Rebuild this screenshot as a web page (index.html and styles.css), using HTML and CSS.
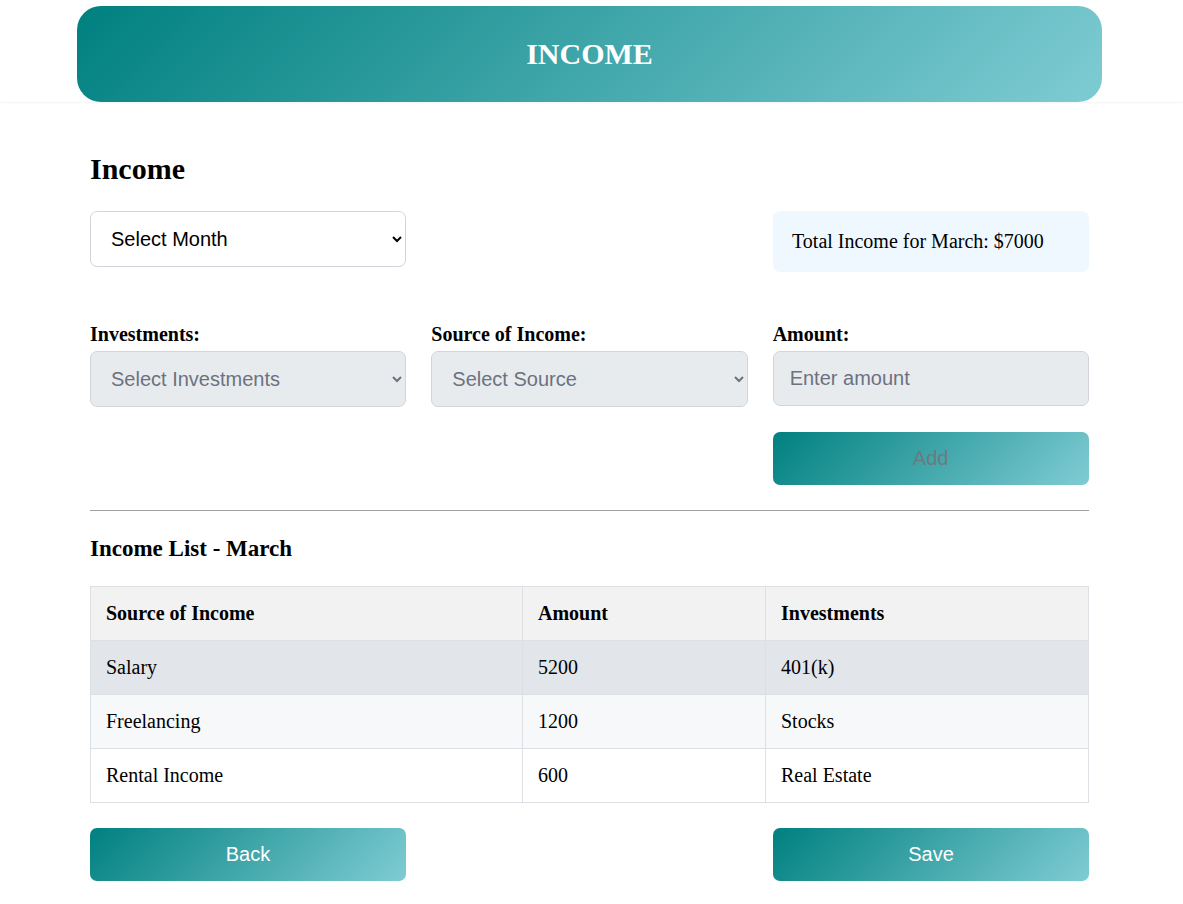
FILE: index.html
```html
<!DOCTYPE html>
<html lang="en">
<head>
<meta charset="utf-8">
<title>Income</title>
<link rel="stylesheet" href="styles.css">
</head>
<body>
<div class="topbar">
  <header class="banner"><h1>INCOME</h1></header>
</div>
<main class="page">
  <h2 class="title">Income</h2>
  <div class="row-top">
    <select class="field field-white">
      <option>Select Month</option>
    </select>
    <div class="total">Total Income for March: $7000</div>
  </div>
  <div class="form-grid">
    <div class="group">
      <label class="lbl">Investments:</label>
      <select class="field field-gray">
        <option>Select Investments</option>
      </select>
    </div>
    <div class="group">
      <label class="lbl">Source of Income:</label>
      <select class="field field-gray">
        <option>Select Source</option>
      </select>
    </div>
    <div class="group">
      <label class="lbl">Amount:</label>
      <input class="field field-gray input" type="text" placeholder="Enter amount">
    </div>
    <div class="spacer"></div>
    <div class="spacer"></div>
    <button class="btn btn-disabled">Add</button>
  </div>
  <hr class="divider">
  <h3 class="list-title">Income List - March</h3>
  <table class="tbl">
    <thead>
      <tr><th class="c1">Source of Income</th><th class="c2">Amount</th><th class="c3">Investments</th></tr>
    </thead>
    <tbody>
      <tr class="r-hover"><td>Salary</td><td>5200</td><td>401(k)</td></tr>
      <tr class="r-alt"><td>Freelancing</td><td>1200</td><td>Stocks</td></tr>
      <tr class="r-plain"><td>Rental Income</td><td>600</td><td>Real Estate</td></tr>
    </tbody>
  </table>
  <div class="actions">
    <button class="btn">Back</button>
    <button class="btn">Save</button>
  </div>
</main>
</body>
</html>
```

FILE: styles.css
```css
* { box-sizing: border-box; }
body {
  margin: 0;
  font-family: "Liberation Serif", "Times New Roman", serif;
  color: #000;
  background: #fff;
}
.topbar {
  padding-top: 6px;
  box-shadow: 0 1px 2px rgba(0, 0, 0, 0.05);
}
.banner {
  margin: 0 81px 0 77px;
  height: 96px;
  border-radius: 24px;
  background: linear-gradient(135deg, #008080 0%, #7fccd3 100%);
  display: flex;
  align-items: center;
  justify-content: center;
}
.banner h1 {
  margin: 0;
  color: #fff;
  font-size: 30px;
  font-weight: bold;
}
.page {
  width: 999px;
  margin-left: 90px;
  padding-bottom: 23px;
}
.title {
  margin: 51px 0 26px;
  font-size: 30px;
  line-height: 32px;
  font-weight: bold;
}
.row-top {
  display: flex;
  justify-content: space-between;
  align-items: flex-start;
}
.field {
  width: 316px;
  height: 56px;
  border: 1px solid #d1d5db;
  border-radius: 7px;
  padding: 0 16px;
  font-family: "Liberation Sans", Arial, sans-serif;
  font-size: 20px;
}
.field-white { background: #fff; color: #000; }
.field-gray { background: #e8ebee; color: #6b7280; width: 100%; }
.input { height: 55px; }
.input::placeholder { color: #6b7280; }
.total {
  width: 316px;
  background: #f0f8ff;
  border-radius: 7px;
  padding: 20px 19px;
  font-size: 20px;
  line-height: 21px;
}
.form-grid {
  margin-top: 52px;
  display: grid;
  grid-template-columns: repeat(3, 1fr);
  column-gap: 25px;
  row-gap: 25px;
}
.group { display: flex; flex-direction: column; }
.lbl {
  font-size: 20px;
  line-height: 21px;
  font-weight: bold;
  margin-bottom: 6px;
}
.btn {
  width: 316px;
  height: 53px;
  border: none;
  border-radius: 7px;
  background: linear-gradient(135deg, #008080 0%, #7fccd3 100%);
  color: #fff;
  font-family: "Liberation Sans", Arial, sans-serif;
  font-size: 20px;
}
.btn-disabled { color: #6b7b80; }
.divider {
  margin: 25px 0 0;
  border: none;
  border-top: 1px solid #a0a0a0;
  height: 0;
}
.list-title {
  margin: 25px 0 25px;
  font-size: 23px;
  line-height: 25px;
  font-weight: bold;
}
.tbl {
  width: 100%;
  border-collapse: collapse;
  font-size: 20px;
}
.tbl th, .tbl td {
  border: 1px solid #dcdfe3;
  height: 54px;
  padding: 0 15px;
  text-align: left;
}
.tbl th { background: #f2f2f2; font-weight: bold; }
.c1 { width: 432px; }
.c2 { width: 243px; }
.r-hover td { background: #e2e5ea; }
.r-alt td { background: #f7f8fa; }
.r-plain td { background: #fff; }
.actions {
  margin-top: 25px;
  display: flex;
  justify-content: space-between;
}
```
